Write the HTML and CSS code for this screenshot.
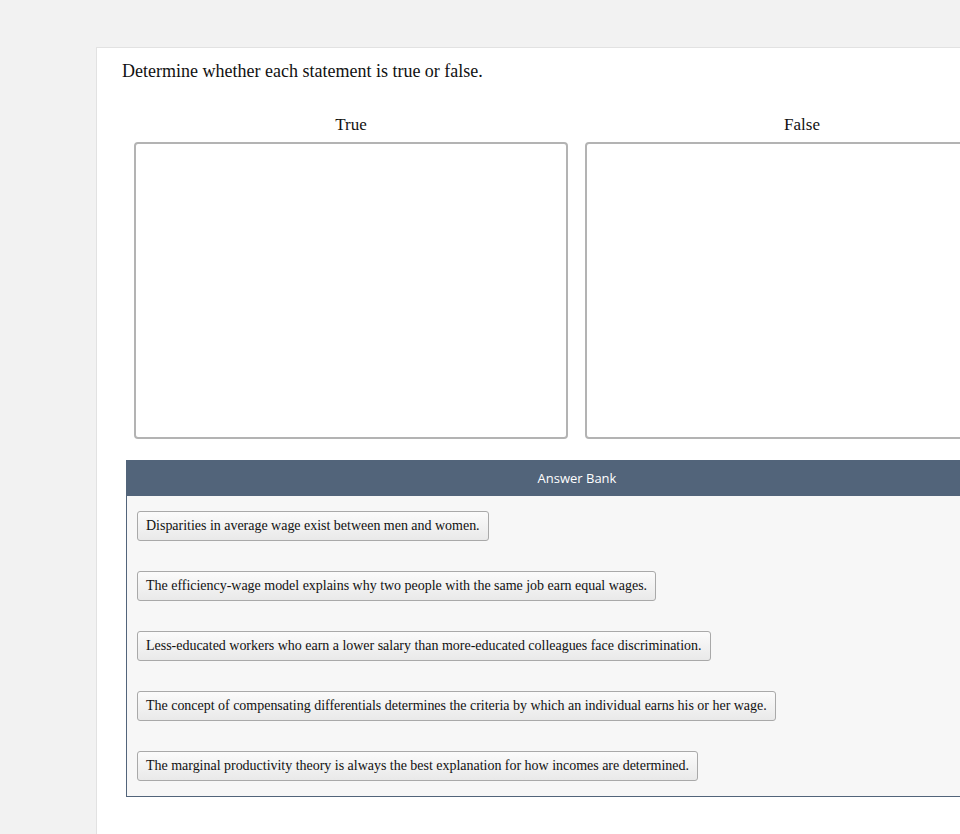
FILE: index.html
```html
<!DOCTYPE html>
<html>
<head>
<meta charset="utf-8">
<link rel="stylesheet" href="styles.css">
</head>
<body>
<div class="panel">
  <p class="prompt">Determine whether each statement is true or false.</p>
  <div class="columns">
    <div class="column">
      <div class="col-title">True</div>
      <div class="dropzone"></div>
    </div>
    <div class="column">
      <div class="col-title">False</div>
      <div class="dropzone"></div>
    </div>
  </div>
  <div class="bank">
    <div class="bank-header">Answer Bank</div>
    <div class="bank-body">
      <div class="item">Disparities in average wage exist between men and women.</div>
      <div class="item">The efficiency-wage model explains why two people with the same job earn equal wages.</div>
      <div class="item">Less-educated workers who earn a lower salary than more-educated colleagues face discrimination.</div>
      <div class="item">The concept of compensating differentials determines the criteria by which an individual earns his or her wage.</div>
      <div class="item">The marginal productivity theory is always the best explanation for how incomes are determined.</div>
    </div>
  </div>
</div>
</body>
</html>
```

FILE: styles.css
```css
html, body {
  margin: 0;
  padding: 0;
}
body {
  background: #f2f2f2;
  font-family: "Liberation Serif", "Times New Roman", serif;
  color: #111;
  overflow: hidden;
  width: 960px;
  height: 834px;
}
.panel {
  margin-left: 96px;
  margin-top: 47px;
  width: 864px;
  height: 787px;
  background: #fff;
  border: 1px solid #e2e2e2;
  border-right: none;
  border-bottom: none;
  box-sizing: border-box;
  padding-left: 25px;
  padding-top: 11px;
  overflow: hidden;
}
.prompt {
  margin: 0;
  font-size: 18px;
  line-height: 24px;
}
.columns {
  display: flex;
  gap: 17px;
  margin-left: 12px;
  margin-top: 32px;
}
.column {
  width: 434px;
  flex: none;
}
.col-title {
  text-align: center;
  font-size: 17px;
  line-height: 20px;
  margin-bottom: 7px;
}
.dropzone {
  height: 297px;
  box-sizing: border-box;
  border: 2px solid #b3b3b3;
  border-radius: 4px;
  background: #fff;
}
.bank {
  margin-top: 21px;
  margin-left: 4px;
  width: 902px;
  flex: none;
  border: 1px solid #52647a;
  box-sizing: border-box;
  background: #f7f7f7;
}
.bank-header {
  background: #52647a;
  color: #fff;
  font-family: "Open Sans", sans-serif;
  font-size: 13px;
  height: 35px;
  line-height: 35px;
  text-align: center;
}
.bank-body {
  display: flex;
  flex-direction: column;
  align-items: flex-start;
  gap: 30px;
  padding: 15px 10px 15px 10px;
}
.item {
  font-size: 14px;
  line-height: 28px;
  padding: 0 8px;
  border: 1px solid #a9a9a9;
  border-radius: 3px;
  background: linear-gradient(#fbfbfb, #e9e9e9);
  color: #111;
  letter-spacing: -0.02px;
}
```
